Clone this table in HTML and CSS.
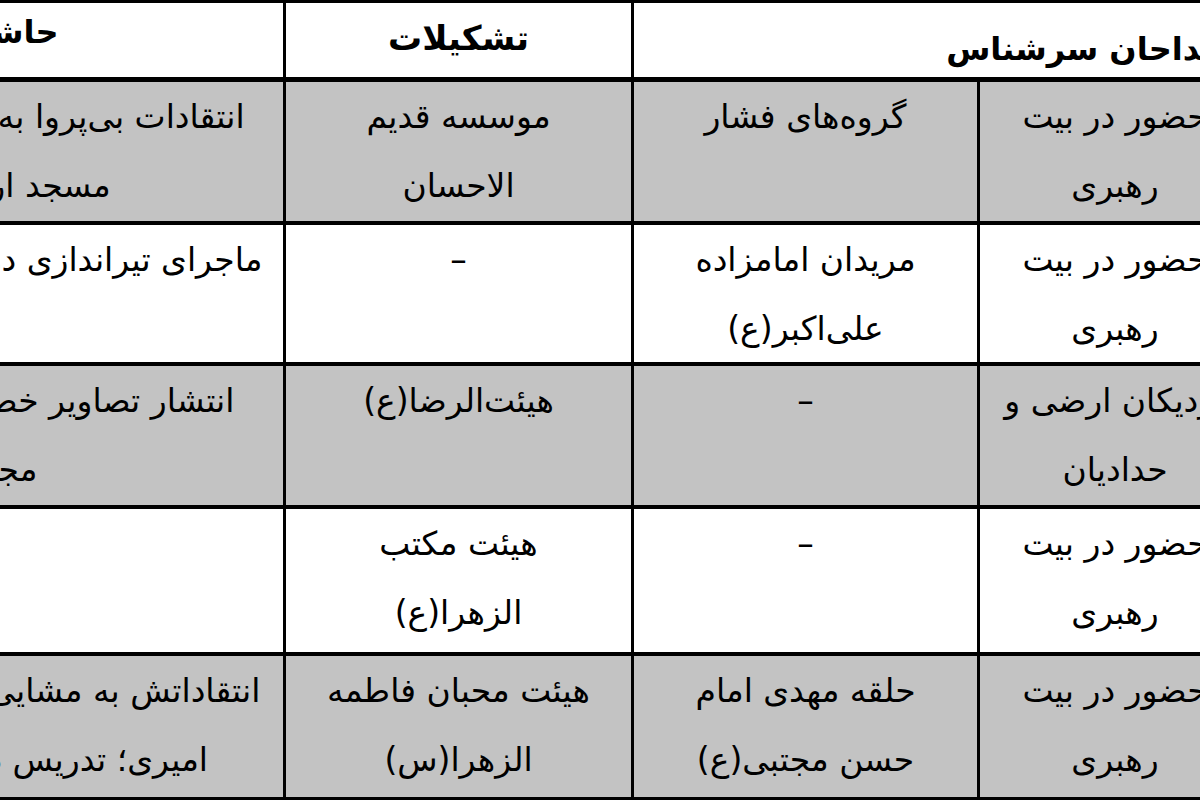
FILE: index.html
```html
<!DOCTYPE html>
<html lang="fa">
<head>
<meta charset="utf-8">
<title>مداحان سرشناس</title>
<link rel="stylesheet" href="styles.css">
</head>
<body>
<div class="frame">
  <div class="sheet" dir="rtl">
    <div class="row head">
      <div class="cell hd-wide">مداحان سرشناس</div>
      <div class="cell hd-mid">تشکیلات</div>
      <div class="cell hd-side">حاشیه‌ها</div>
    </div>
    <div class="row shade">
      <div class="cell">حضور در بیت<br>رهبری</div>
      <div class="cell">گروه‌های فشار</div>
      <div class="cell">موسسه قدیم<br>الاحسان</div>
      <div class="cell">انتقادات بی‌پروا به دولت در سخنرانی<br>مسجد ارک تهران</div>
    </div>
    <div class="row">
      <div class="cell">حضور در بیت<br>رهبری</div>
      <div class="cell">مریدان امامزاده<br>علی‌اکبر(ع)</div>
      <div class="cell">–</div>
      <div class="cell">ماجرای تیراندازی در مراسم عزاداری او</div>
    </div>
    <div class="row shade">
      <div class="cell">نزدیکان ارضی و<br>حدادیان</div>
      <div class="cell">–</div>
      <div class="cell">هیئت‌الرضا(ع)</div>
      <div class="cell">انتشار تصاویر خصوصی او در فضای<br>مجازی</div>
    </div>
    <div class="row">
      <div class="cell">حضور در بیت<br>رهبری</div>
      <div class="cell">–</div>
      <div class="cell">هیئت مکتب<br>الزهرا(ع)</div>
      <div class="cell"></div>
    </div>
    <div class="row shade">
      <div class="cell">حضور در بیت<br>رهبری</div>
      <div class="cell">حلقه مهدی امام<br>حسن مجتبی(ع)</div>
      <div class="cell">هیئت محبان فاطمه<br>الزهرا(س)</div>
      <div class="cell">انتقاداتش به مشایی و احمدی‌نژاد در آن<br>امیری؛ تدریس در حوزه علمیه و</div>
    </div>
  </div>
</div>
</body>
</html>
```

FILE: styles.css
```css
html, body {
  margin: 0;
  padding: 0;
  background: #ffffff;
}

.frame {
  width: 1200px;
  height: 800px;
  overflow: hidden;
}

.sheet {
  display: grid;
  direction: rtl;
  box-sizing: border-box;
  width: 1555px;
  margin-left: -302px;
  padding: 3px;
  background: #000000;
  column-gap: 3px;
  row-gap: 4px;
  grid-template-columns: 270px 343px 345px 582px;
  grid-template-rows: 75px 139px 137px 139px 143px 141px;
  font-family: "DejaVu Sans", sans-serif;
  color: #000000;
}

.row {
  display: contents;
}

.cell {
  background: #ffffff;
  text-align: center;
  white-space: nowrap;
  overflow: hidden;
  font-size: 33px;
  line-height: 69px;
}

.shade .cell {
  background: #c3c3c3;
}

.head .cell {
  box-sizing: border-box;
  border-bottom: 1px solid #000000;
  font-weight: bold;
}

.hd-wide {
  grid-column: span 2;
  text-align: right;
  padding-right: 29px;
  padding-top: 11px;
  font-size: 32px;
  line-height: 70px;
}

.hd-mid {
  font-size: 34px;
  line-height: 70px;
}

.hd-side {
  font-size: 32px;
  line-height: 58px;
}
```
